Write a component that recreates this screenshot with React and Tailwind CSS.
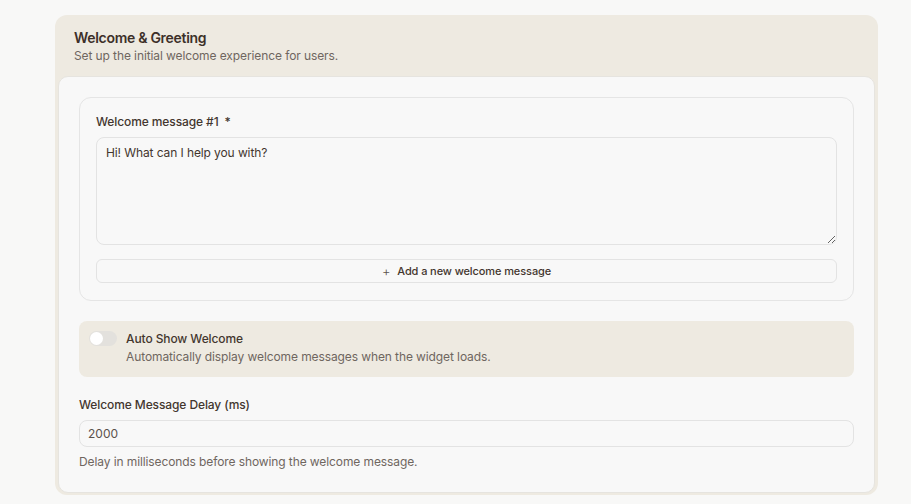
import React from "react";

const App = () => {
  return (
    <div className="min-h-screen w-full bg-[#f8f8f7] pt-[15px] pl-[55px] pr-[33px] font-['Inter',sans-serif]">
      <div className="rounded-xl bg-[#eeeae1] pb-[2px] px-[3px]">
        <div className="px-[16px] pt-[14px] pb-[12px]">
          <h2 className="text-[14px] font-semibold leading-[18px] tracking-[-0.3px] text-[#3d3029]">
            Welcome &amp; Greeting
          </h2>
          <p className="mt-[1px] text-[12px] leading-[16px] tracking-[-0.1px] text-[#6f665f]">
            Set up the initial welcome experience for users.
          </p>
        </div>
        <div className="rounded-[10px] border border-[#e6e4df] bg-[#f8f8f8] px-[20px] pt-[20px] pb-[22px]">
          <div className="rounded-xl border border-[#e5e5e5] px-[16px] pt-[16px] pb-[17px]">
            <label className="flex items-center gap-[6px] text-[12px] font-medium leading-[16px] tracking-[-0.1px] text-[#43362e]">
              Welcome message #1 <span className="text-[#43362e]">*</span>
            </label>
            <textarea
              defaultValue="Hi! What can I help you with?"
              className="mt-[7px] block h-[108px] w-full rounded-lg border border-[#e3e3e3] bg-[#f8f8f8] px-[9px] py-[7px] text-[12px] leading-[16px] tracking-[-0.1px] text-[#43362e] outline-none"
            />
            <button className="mt-[14px] flex h-[24px] w-full items-center justify-center gap-[7px] rounded-md border border-[#e3e3e3] text-[11px] font-medium tracking-[-0.1px] text-[#43362e]">
              <span className="text-[13px] font-light leading-none text-[#5b524c]">+</span>
              Add a new welcome message
            </button>
          </div>

          <div className="mt-[20px] flex gap-[9px] rounded-lg bg-[#eeeae1] px-[10px] pt-[10px] pb-[12px]">
            <div className="flex h-[15px] w-[28px] items-center rounded-full bg-[#e3e1dd] px-[1px]">
              <div className="h-[13px] w-[13px] rounded-full bg-white" />
            </div>
            <div>
              <p className="text-[12px] font-medium leading-[16px] tracking-[-0.1px] text-[#43362e]">
                Auto Show Welcome
              </p>
              <p className="mt-[2px] text-[12px] leading-[16px] tracking-[-0.1px] text-[#6f665f]">
                Automatically display welcome messages when the widget loads.
              </p>
            </div>
          </div>

          <div className="mt-[20px]">
            <label className="block text-[12px] font-medium leading-[16px] tracking-[-0.1px] text-[#43362e]">
              Welcome Message Delay (ms)
            </label>
            <input
              defaultValue="2000"
              className="mt-[7px] block h-[27px] w-full rounded-lg border border-[#e3e3e3] bg-[#f8f8f8] px-[8px] text-[12px] text-[#5b524c] outline-none"
            />
            <p className="mt-[7px] text-[12px] leading-[16px] tracking-[-0.1px] text-[#6f665f]">
              Delay in milliseconds before showing the welcome message.
            </p>
          </div>
        </div>
      </div>
    </div>
  );
};

export default App;
